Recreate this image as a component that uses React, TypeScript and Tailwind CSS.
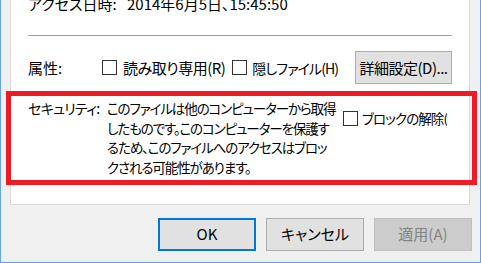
import React from 'react';

const font = "font-['Noto_Sans_CJK_JP','Noto_Sans',sans-serif] [font-feature-settings:'palt']";

const CheckBox: React.FC = () => (
  <span className="w-[15px] h-[15px] shrink-0 border border-[#333333] bg-white" />
);

const Button: React.FC<{ label: string; variant?: 'default' | 'primary' | 'disabled' }> = ({ label, variant = 'default' }) => {
  const cls =
    variant === 'primary'
      ? 'border-2 border-[#0078d7] bg-[#e1e1e1] text-black'
      : variant === 'disabled'
        ? 'border border-[#bfbfbf] bg-[#cccccc] text-[#838383]'
        : 'border border-[#adadad] bg-[#e1e1e1] text-black';
  return (
    <div className={`w-[98px] h-[33px] flex items-center justify-center text-[15px] whitespace-nowrap ${cls}`}>{label}</div>
  );
};

export default function App() {
  return (
    <div className={`relative w-[481px] h-[263px] overflow-hidden bg-[#f0f0f0] border-x border-b border-[#66a3e6] flex flex-col text-black whitespace-nowrap ${font}`}>
      {/* tab page */}
      <div className="ml-[9px] w-[460px] h-[205px] shrink-0 bg-white border-x border-b border-[#d9d9d9] flex flex-col text-[15px] leading-[20px]">
        <div className="-mt-[6px] h-[20px] flex pl-[17px]">
          <span className="w-[99px]">アクセス日時:</span>
          <span>2014年6月5日、15:45:50</span>
        </div>

        <div className="mt-[21px] ml-[17px] w-[424px] h-px bg-[#a0a0a0] shrink-0" />

        <div className="mt-[15px] h-[33px] flex items-center px-[17px]">
          <span className="w-[74px] shrink-0">属性:</span>
          <CheckBox />
          <span className="ml-[6px] tracking-[-0.5px]">読み取り専用(R)</span>
          <span className="ml-[7px] flex items-center">
            <CheckBox />
          </span>
          <span className="ml-[5px] text-[14px] tracking-[-0.9px]">隠しファイル(H)</span>
          <div className="ml-auto w-[97px] h-[33px] shrink-0 border border-[#adadad] bg-[#e1e1e1] flex items-center justify-center tracking-[-0.5px]">
            詳細設定(D)...
          </div>
        </div>

        <div className="mt-[15px] flex pl-[17px] pr-[17px] leading-[19.7px]">
          <span className="w-[79px] shrink-0 text-[14px] tracking-[-0.7px]">セキュリティ:</span>
          <p className="w-[236px] shrink-0 text-[13.5px] tracking-[-1.1px]">
            このファイルは他のコンピューターから取得
            <br />
            したものです。このコンピューターを保護す
            <br />
            るため、このファイルへのアクセスはブロッ
            <br />
            クされる可能性があります。
          </p>
          <div className="mt-[12px] flex items-center gap-[4px] h-[15px] min-w-0 overflow-hidden">
            <CheckBox />
            <span className="text-[13.5px] tracking-[-0.9px]">ブロックの解除(</span>
          </div>
        </div>
      </div>

      {/* buttons */}
      <div className="mt-[13px] flex justify-end gap-[10px] pr-[8px]">
        <Button label="OK" variant="primary" />
        <Button label="キャンセル" />
        <Button label="適用(A)" variant="disabled" />
      </div>

      {/* red highlight drawn over the dialog */}
      <div className="absolute left-[5px] top-[91px] w-[471px] h-[94px] border-[5px] border-[#ed1c24] pointer-events-none" />
    </div>
  );
}
